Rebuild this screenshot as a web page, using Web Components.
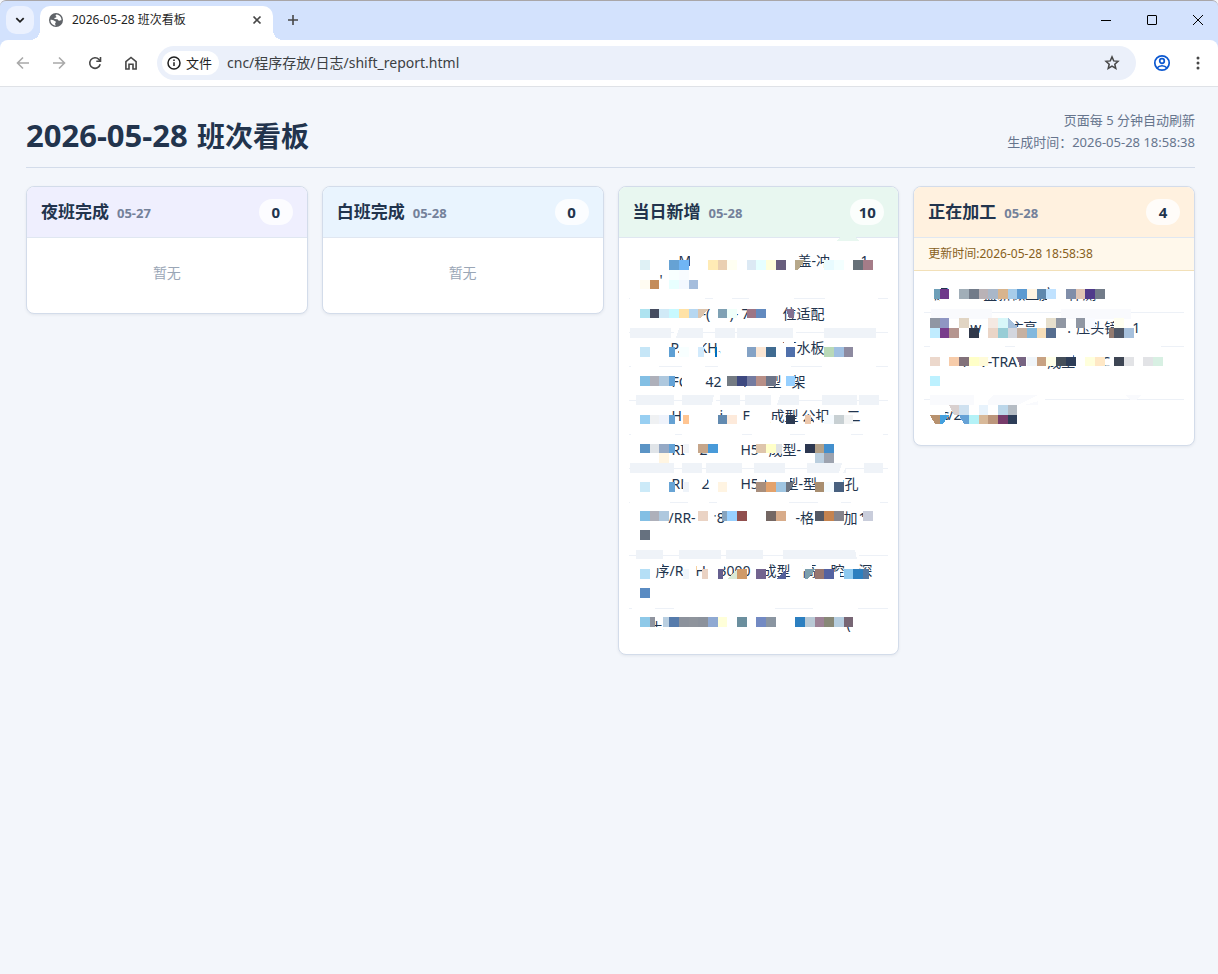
<!DOCTYPE html>
<html lang="zh-CN">
<head>
<meta charset="utf-8">
<title>2026-05-28 班次看板</title>
<style>
html,body{margin:0;min-height:100%;background:#f3f6fb}
body{font-family:"Noto Sans","Noto Sans CJK SC",sans-serif;color:#22344d}
</style>
</head>
<body>
<browser-window>
  <shift-board>
    <shift-card heading="夜班完成" date="05-27" count="0" tone="#efeffe"></shift-card>
    <shift-card heading="白班完成" date="05-28" count="0" tone="#e9f4fe"></shift-card>
    <shift-card heading="当日新增" date="05-28" count="10" tone="#e8f7f0" list="added"></shift-card>
    <shift-card heading="正在加工" date="05-28" count="4" tone="#fff1df" list="running" updated="更新时间:2026-05-28 18:58:38"></shift-card>
  </shift-board>
</browser-window>
<script>
class BrowserWindow extends HTMLElement{
  constructor(){
    super();
    this.attachShadow({mode:'open'}).innerHTML=`
<style>
:host{display:block}
*{box-sizing:border-box}
button{border:0;padding:0;background:none;display:flex;align-items:center;justify-content:center;color:#474747;flex:none}
svg{display:block;fill:none;stroke:currentColor;flex:none}
svg.solid{fill:currentColor;stroke:none}
.strip{height:40px;background:#d3e2fd;border-top:1px solid #a9a6a8;border-radius:6px 6px 0 0;display:flex;padding:5px 0 0 6px}
.search{width:28px;height:28px;border-radius:10px;background:#ebf1fe;color:#1f1f1f}
.tab{position:relative;flex:0 1 233px;margin-left:6px;height:34px;background:#fff;border-radius:10px 10px 0 0;display:flex;align-items:center;padding:0 8px 6px;font-size:12px;line-height:16px;color:#1f1f1f}
.tab::before,.tab::after{content:"";position:absolute;bottom:0;width:10px;height:10px}
.tab::before{left:-10px;background:radial-gradient(circle at 0 0,transparent 10px,#fff 10px)}
.tab::after{right:-10px;background:radial-gradient(circle at 100% 0,transparent 10px,#fff 10px)}
.tab span{flex:1;margin-left:8px;white-space:nowrap}
.icon{color:#5f6368}
.new{width:28px;height:28px;margin-left:6px}
.win{margin-left:auto;display:flex;gap:6px}
.win button{width:40px;height:28px;color:#000}
.back{background:#d3e2fd}
.bar{height:47px;background:#fff;border-bottom:1px solid #dfe2e7;border-radius:8px 8px 0 0;display:flex;align-items:center;gap:4px;padding:0 4px 0 7px}
.bar>button{width:32px;height:32px}
.bar>.off{color:#a9a9a9}
.omni{flex:1;height:34px;margin:0 6px;border-radius:17px;background:#ebf0fa;display:flex;align-items:center;padding:0 8px 0 5px}
.chip{height:24px;border-radius:12px;background:#fff;padding:0 7px 0 4px;gap:4px;color:#1f1f1f;font:13px/20px "Noto Sans","Noto Sans CJK SC",sans-serif}
input{flex:1;min-width:0;border:0;outline:0;background:none;padding:0;margin:0 8px;font:14px/20px "Noto Sans","Noto Sans CJK SC",sans-serif;color:#3c4043}
.star{width:32px;height:32px}
.bar>.me{color:#0b57d0}
</style>
<div class="strip">
  <button class="search" aria-label="搜索标签页"><svg width="10" height="10" viewBox="0 0 10 10" stroke-width="1.8"><path d="M1.300 3.200 5 6.800 8.700 3.200"/></svg></button>
  <div class="tab">
    <svg class="solid icon" width="16" height="16" viewBox="0 0 16 16"><circle cx="8" cy="8" r="7"/><path fill="#fff" d="M8.700 2.500c-1.600.300-1.200 1.500-.500 2 .800.500 0 1.200-.900 1.200-.800 0-1 .700-1 1.400l3 .200c.900.200.700 1.500 1.700 1.500.800 0 1.200-.500 2.500-.500.200-2.900-1.800-5.500-4.800-5.800ZM2.500 7.700c1.600 0 2.700.200 3.500.900.700.700 1.900.500 1.900 1.500 0 .800-.800.900-.800 1.700 0 .700.300 1.100.8 1.700C4.700 13.500 2.300 10.900 2.500 7.700Z"/></svg>
    <span>2026-05-28 班次看板</span>
    <button aria-label="关闭标签页"><svg width="16" height="16" viewBox="0 0 16 16" stroke-width="1.700"><path d="m4.500 4.500 7 7m0-7-7 7"/></svg></button>
  </div>
  <button class="new" aria-label="新标签页"><svg width="12" height="12" viewBox="0 0 12 12" stroke-width="1.600"><path d="M6 1v10M1 6h10"/></svg></button>
  <div class="win">
    <button aria-label="最小化"><svg width="10" height="10" viewBox="0 0 10 10"><path d="M0 5.500h10"/></svg></button>
    <button aria-label="最大化"><svg width="10" height="10" viewBox="0 0 10 10"><rect x=".5" y=".5" width="9" height="9" rx=".5"/></svg></button>
    <button aria-label="关闭"><svg width="10" height="10" viewBox="0 0 10 10"><path d="m0 0 10 10M10 0 0 10"/></svg></button>
  </div>
</div>
<div class="back"><div class="bar">
  <button class="off" aria-label="后退"><svg width="14" height="14" viewBox="0 0 14 14" stroke-width="1.600"><path d="M13 7H2M7 1.500 1.500 7 7 12.500"/></svg></button>
  <button class="off" aria-label="前进"><svg width="14" height="14" viewBox="0 0 14 14" stroke-width="1.600"><path d="M1 7h11M7 1.500 12.500 7 7 12.500"/></svg></button>
  <button aria-label="重新加载"><svg width="14" height="14" viewBox="0 0 14 14" stroke-width="1.600"><path d="M12.200 8.300A5.300 5.300 0 1 1 11 3.500L12.500 5M12.500 1v4.300H8.300"/></svg></button>
  <button aria-label="主页"><svg width="14" height="14" viewBox="0 0 14 14" stroke-width="1.600"><path d="M1.900 13V5.600L7 1.500l5.100 4.100V13H9V8.300H5V13Z"/></svg></button>
  <div class="omni">
    <button class="chip"><svg width="16" height="16" viewBox="0 0 16 16" stroke-width="1.500"><circle cx="8" cy="8" r="6"/><path d="M8 7.300v3.700M8 4.600v1.500"/></svg>文件</button>
    <input aria-label="地址" value="cnc/程序存放/日志/shift_report.html">
    <button class="star" aria-label="收藏"><svg width="16" height="16" viewBox="0 0 16 16" stroke-width="1.500"><path d="m8 1.900 1.700 4 4.300.400-3.200 2.900 1 4.300L8 11.200l-3.800 2.300 1-4.300L2 6.300l4.300-.400Z"/></svg></button>
  </div>
  <button class="me" aria-label="个人资料"><svg width="18" height="18" viewBox="0 0 18 18" stroke-width="1.700"><circle cx="9" cy="9" r="7.200"/><circle cx="9" cy="7" r="2.300"/><path d="M4 14c2.500-3 7.500-3 10 0"/></svg></button>
  <button aria-label="菜单"><svg class="solid" width="4" height="14" viewBox="0 0 4 14"><circle cx="2" cy="2" r="1.500"/><circle cx="2" cy="7" r="1.500"/><circle cx="2" cy="12" r="1.500"/></svg></button>
</div></div>
<slot></slot>`;
  }
}
customElements.define('browser-window',BrowserWindow);

class ShiftBoard extends HTMLElement{
  constructor(){
    super();
    this.attachShadow({mode:'open'}).innerHTML=`
<style>
:host{display:block;padding:22px 23px 26px 26px}
header{display:flex;justify-content:space-between;align-items:flex-end;padding-bottom:14px;border-bottom:1px solid #d3dcea;margin-bottom:18px}
h1{margin:0;font-size:28px;line-height:34px;font-weight:700}
h1 time{font-size:31px;margin-right:2px}
p{margin:0;font-size:13px;line-height:22px;color:#66758d;text-align:right}
.grid{display:grid;grid-template-columns:repeat(4,minmax(0,1fr));gap:14px;align-items:start}
</style>
<header><h1><time>2026-05-28</time> 班次看板</h1><p>页面每 5 分钟自动刷新<br>生成时间：2026-05-28 18:58:38</p></header>
<div class="grid"><slot></slot></div>`;
  }
}
customElements.define('shift-board',ShiftBoard);

/* Each list: rows of readable fragments as [offset, text], and the mosaic that hides the rest.
   A mosaic row is "top height | column:colour ..."; offsets count from the card's left and top edge. */
const LISTS={
added:{
 left:22,
 rows:[
  [[[61,'M'],[180,'盖-冲'],[243,'1']],[[42,"'"]]],
  [[[84,'-('],[112,')-'],[124,'7'],[165,'位适配']]],
  [[[53,'P.'],[81,'KH,'],[165,'下水板']]],
  [[[54,'FC'],[88,'42'],[119,'H'],[150,'型'],[174,'架']]],
  [[[54,'H'],[102,'i'],[125,'F'],[153,'成型'],[184,'公扣'],[229,'二']]],
  [[[54,'RI'],[82,'2'],[123,'H5'],[151,'成型'],[179,'-']]],
  [[[54,'RL'],[84,'2'],[123,'H50'],[167,'型-型'],[213,'内孔']]],
  [[[51,'/RR-'],[96,"'8"],[178,'-格'],[226,'加'],[241,'1']],[]],
  [[[38,'序/R'],[78,'H'],[101,'3000'],[145,'成型'],[185,'高'],[213,'腔'],[241,'深']],[]],
  [[[32,'主'],[229,'(']]]
 ],
 under:[
  ['#fff','12 112 75 3|95 112 19 3|131 112 45 3|207 112 53 3|13 180 28 3|64 180 23 3|100 180 73 3|204 180 54 3|13 248 44 3|64 248 60 3|134 248 38 3|187 248 46 3|245 248 20 3|12 315 40 3|70 315 21 3|99 315 72 3|200 315 23 3|233 315 29 3|14 421 23 3|56 421 101 3|195 421 45 3|38 60 4 14|72 69 10 16|60 81 16 7|107 119 8 7|170 143 8 10|166 155 10 14|61 153 8 14|80 153 5 18|98 166 4 7|64 187 12 18|87 185 4 10|119 200 7 8|125 234 8 8|153 234 8 4|196 234 6 8|229 236 12 6|153 255 10 6|184 253 9 8|84 288 5 9|139 290 8 14|167 286 5 12|213 286 12 15|245 288 7 12|95 321 5 8|241 331 10 9|38 374 6 8|79 376 4 8|101 374 5 8|118 387 10 6|145 374 6 10|185 373 9 10|213 386 9 7|32 425 13 10|32 441 13 8|229 428 6 7'],
  ['#eff3f8','12 142 41 10|58 142 27 10|97 142 20 10|119 142 56 10|206 142 52 10|18 209 38 10|64 209 32 10|102 209 20 10|127 209 26 10|159 209 22 10|204 209 35 10|241 209 20 10|12 277 44 10|64 277 20 10|88 277 36 10|136 277 31 10|189 277 39 10|246 277 19 10|18 364 27 9|61 364 42 9|108 364 37 9|165 364 74 9']
 ],
 shapes:'<path fill="#e8f7f0" d="m222 51h15l4 4h-22Z"/><path fill="#fff" d="M56 142h5l-3 10h-3ZM96 209h2v10h-4ZM153 209h9l-3 10h-6ZM224 277h6l-5 10h-4ZM237 364h4v9h-2Z"/><path fill="#0070c0" d="M97 161h2v10h-2Z"/>',
 mosaic:[
 '74 10|0:dff1f5 3:66a2d4 4:70b5f5 7:ffebb5 8:ead0b1 9:fffff2 11:dce9f4 12:e6ffff 13:ffffdc 14:685e7d 16:b7a88a/ 19:e8fbff 20:f3ffff 22:667078 23:a57c88','84 10|3:f8ffff 4:f8fcff',
 '94 9|0:fffcf2 1:c48c5a 3:e8ffff 4:f3f8ff 5:a5bddc',
 '123 9|0:aee3f0 1:454c60 2:d1eaf7 3:c8f9ff 4:ffe2a6 5:b6d7f1 6:dcc5ae/ 8:7fa1b4 9:f0fffa 11:9c7585 12:628abf 15:81708f<',
 '161 10|0:c6e6f7 3:5fa0d4l 4:f8ffff 6:d2eafcl 11:84a2c5 12:fbe6d3 13:406b91 15:5070ab 19:b9d9b7 20:9fbfe1 21:8d8aa0',
 '190 10|0:83bfe4 1:aeb0ba 2:aec8de 3:64a3d7l 9:747b83 10:3e4980 11:747ba0 12:b88f87 13:6d7589 15:97d0ff',
 '229 9|0:98cff2 1:eff1f3 2:eff3fb 3:65a1d3l 4:ffc592r 8:628ab0 9:fdeadb 15:2c3a52 17:edc8acl 19:f6fbff 20:c8d0d3 21:f2f3f3',
 '258 9|0:5b94c5 1:e0e4e8 2:95a9c5 3:63a2d6l 4:f0f5far 6:c6a68a 7:489ad9 12:dec5ab 13:ffffc8 14:dfe2e5l 17:2c3750 18:b2a088 19:438fcd','267 10|2:fff5e2 18:bacede 19:9da3af',
 '296 10|0:cceaf8 3:68a4d5l 4:eef3f9r 8:fff4e2 12:a88e7c 13:e3a26c 14:9fc5e1 15:6e7580/ 18:a88e70 19:f4fbff 20:48607f',
 '325 10|0:83bfe4 1:aeb0ba 2:aec8de 6:ead3c4 8:87a4ber 9:98d0ff 10:914f4e 13:746763 14:d8ac8a 18:555965 19:c5834f 20:87858c 23:c9cddb','344 10|0:66717f',
 '383 10|0:b5dff6 4:f0f6fbr 6:ead2c3r 8:655f8fl 9:daead6\\ 10:d09a68 12:73648f 14:55619b\\ 17:7c9fae/ 18:98766f 19:5462a1 21:8dc9ef 22:2c7fbf 23:5477a0l','402 10|0:5a8bc2',
 '431 10|0:8ec9e8 1:8f949fl 2:b9cfe1r 3:567bab 4:8c929c 5:8f949c 6:8c929c 7:8fa9d2 8:ffffd9 10:6b8f9e 12:738ac3 13:8a95a1 16:2c7fc0 17:b9c9d5 18:9d8296 19:888877 20:b6cee0 21:776674'
 ]},
running:{
 left:17,
 rows:[
  [[[19,'原'],[58,'5'],[68,'盒新做型腔'],[153,'件测']]],
  [[[57,'w'],[97,'主'],[110,'高'],[154,'.'],[163,'压头镜'],[219,'1']]],
  [[[47,'\\'],[66,'V-TRAY'],[134,'成型'],[188,'C']],[]],
  [[[20,'os'],[34,'/2']]]
 ],
 under:[
  ['#fff','18 101 10 3|52 101 80 3|141 101 60 3|27 113 8 6|52 113 15 6|134 113 8 7|17 158 75 4|102 158 146 4|57 133 12 6|97 152 40 8|97 141 12 2|66 170 4 8|47 168 8 8|134 165 26 10|188 180 12 8|20 223 12 7|34 219 5 6'],
  ['#f9fafd','18 123 61 10|148 123 70 10|17 209 44 10|75 209 50 10']
 ],
 shapes:'<path fill="#fff" d="m61 209h20l-11 10h-9Zm64 0h24l-38 10h-6Z"/><path fill="#f9fafd" d="m212 209h16l-5 5h-6Z"/>',
 mosaic:[
 '103 10|0:6e9fb8r 1:70388b 3:a1aeb8 4:727b89 5:b9b2b6 6:a9b7c8 7:d8b48d 8:a7cce9 9:5c9ad1 10:fff4e2 11:5f88ad 12:c0e2ff 14:808ea9 15:dfc4b3 16:4f3a8a 17:727b89',
 '132 10|0:9097a3 1:8f96c3 3:e1d5c4 6:f4e9e2 7:d8f7f9 8:a6c0dc, 12:e6dfcd 13:9097a3 15:9097a3 16:f9fbff 19:fffff0',
 '142 10|0:c0ecff 1:783c8b 2:b5958f 4:30384a 6:ead5c7 7:98cdd6 8:d3d6de 9:c6b1a2 10:82b8dd 11:f6deb9 12:566d8f 18:947b70r 19:4f5868 20:a6c0dc',
 '171 9|0:ecd8cc 2:f7ccaa 3:82717a 4:ffffc8 5:fffbd9 9:776482< 10:f0f5f9 11:c8a282 12:ffffe8 13:454f5a 14:2d3d58 16:ffffdc 17:ffe8c6 19:3e4654 20:e2e3e6 22:e2e3e6 23:d8f0e3','190 10|0:bdf1ff',
 '219 10|2:d9d0cf> 3:cfe1f0 5:e8f3fc 7:bcd7ea 8:b5bcc4','229 9|0:b8926f> 1:44a0de/ 3:66a2d6> 4:b4f2f7 5:d8b999 6:bc967c 7:773c6b 8:2d3d58'
 ]}
};

function cell(left,y,h,spec){
  const [,col,rgb,cut]=spec.match(/^(\d+):([0-9a-f]{6})(.?)$/);
  let x=left+Math.round(col*9.7), r=left+Math.round((+col+1)*9.7), b=y+h;
  if(cut==='l') r-=4;
  if(cut==='r') x+=4;
  const d={
    '/':`M${x} ${y}H${r}L${x+3} ${b}H${x}Z`,
    '\\':`M${x} ${b}L${r} ${y+1}V${b}Z`,
    ',':`M${x} ${y}L${r} ${b-2}V${b}H${x}Z`,
    '<':`M${x} ${y}H${r-1}V${b}H${x+3}Z`,
    '>':`M${x} ${y}H${r}V${b}H${x+5}Z`
  }[cut]||`M${x} ${y}H${r}V${b}H${x}Z`;
  return `<path fill="#${rgb}" d="${d}"/>`;
}
function mosaic(list){
  const base=list.under.map(([fill,rects])=>rects.split('|').map(s=>{
    const [x,y,w,h]=s.split(' ');
    return `<rect fill="${fill}" x="${x}" y="${y}" width="${w}" height="${h}"/>`;
  }).join('')).join('');
  const cells=list.mosaic.map(s=>{
    const [pos,specs]=s.split('|'), [y,h]=pos.split(' ').map(Number);
    return specs.split(' ').map(c=>cell(list.left,y,h,c)).join('');
  }).join('');
  return `<svg aria-hidden="true" shape-rendering="crispEdges">${base}${list.shapes}${cells}</svg>`;
}
/* A fragment is as wide as the distance to the next one, so each starts after its hidden stretch. */
function line(parts){
  const all=[[21,''],...parts];
  return `<div class="line">${all.map(([x,t],i)=>{
    const next=all[i+1];
    return next?`<span style="width:${next[0]-x}px">${t}</span>`:`<span>${t}</span>`;
  }).join('')}</div>`;
}

class ShiftCard extends HTMLElement{
  connectedCallback(){
    if(this.shadowRoot) return;
    const a=n=>this.getAttribute(n), list=LISTS[a('list')];
    this.attachShadow({mode:'open'}).innerHTML=`
<style>
:host{display:block;position:relative;border:1px solid #d3dcea;border-radius:8px;background:#fff;overflow:hidden;box-shadow:0 1px 3px #22344d14}
header{display:flex;align-items:center;padding:12px 14px;background:${a('tone')};border-bottom:1px solid #e0e7f1}
h2{display:flex;align-items:baseline;gap:8px;margin:0;height:26px;font-size:17px;line-height:26px;font-weight:700}
h2 small{font-size:13px;line-height:20px;color:#74819a}
output{margin-left:auto;box-sizing:border-box;min-width:34px;height:26px;border-radius:13px;background:#ffffffcc;font-size:15px;line-height:26px;font-weight:700;text-align:center;padding:0 8px}
.updated{margin:0;padding:6px 14px;font-size:12px;line-height:20px;color:#87601c;background:#fff8eb;border-bottom:1px solid #f2e0b8}
.body{padding:8px 10px 12px}
.empty{margin:0;padding:17px 0 19px;font-size:14px;line-height:19px;color:#9aa6b6;text-align:center}
ul{list-style:none;margin:0;padding:0}
li{padding:5px 10px 9px;border-bottom:1px solid #edf1f7}
li:last-child{border:0}
.line{display:flex;height:19px;font-size:14px;line-height:19px;white-space:nowrap}
.line span{flex:none}
svg{position:absolute;left:-1px;top:-1px;width:100%;height:100%;pointer-events:none}
</style>
<header><h2>${a('heading')}<small>${a('date')}</small></h2><output>${a('count')}</output></header>
${a('updated')?`<p class="updated">${a('updated')}</p>`:''}
<div class="body">${list?`<ul>${list.rows.map(r=>`<li>${r.map(line).join('')}</li>`).join('')}</ul>`:'<p class="empty">暂无</p>'}</div>
${list?mosaic(list):''}`;
  }
}
customElements.define('shift-card',ShiftCard);
</script>
</body>
</html>
